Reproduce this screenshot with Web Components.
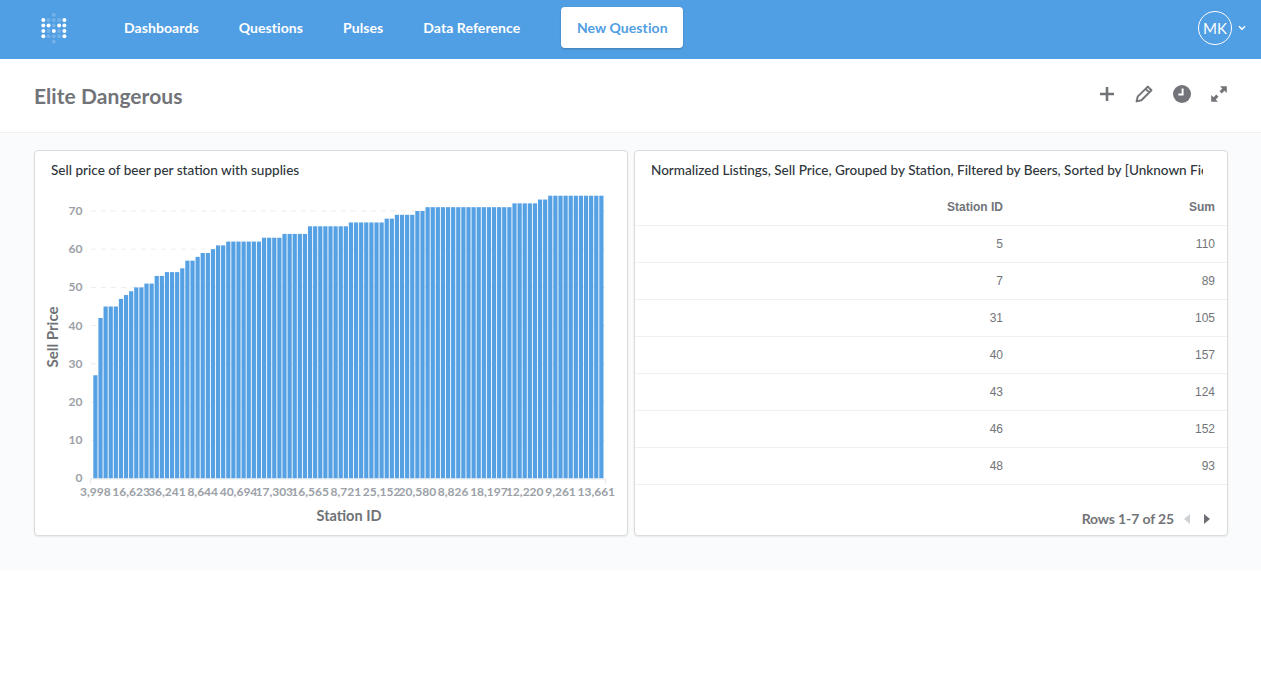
<!DOCTYPE html>
<html>
<head>
<meta charset="utf-8">
<title>Elite Dangerous</title>
<style>
  html, body { margin: 0; padding: 0; background: #fff; font-family: Lato, "Liberation Sans", sans-serif; }
</style>
</head>
<body>
<mb-nav></mb-nav>
<dash-header title="Elite Dangerous"></dash-header>
<dash-grid>
  <dash-card title="Sell price of beer per station with supplies">
    <bar-chart></bar-chart>
  </dash-card>
  <dash-card title="Normalized Listings, Sell Price, Grouped by Station, Filtered by Beers, Sorted by [Unknown Field] descending">
    <data-table></data-table>
  </dash-card>
</dash-grid>

<script>
class MbNav extends HTMLElement {
  constructor() {
    super();
    this.attachShadow({ mode: 'open' });
  }

  connectedCallback() {
    // logo is a 5 x 6 dot matrix, bright dots spell the M
    const bright = new Set(['0,1','0,2','0,3','0,4','4,1','4,2','4,3','4,4','1,2','3,2','2,3']);
    let dots = '';
    for (let c = 0; c < 5; c++) {
      for (let r = 0; r < 6; r++) {
        if ((r === 0 || r === 5) && c !== 2) continue;
        const on = bright.has(`${c},${r}`);
        dots += `<circle cx="${3.3 + c * 5.27}" cy="${2.7 + r * 5.4}" r="2" fill="#fff" fill-opacity="${on ? 1 : 0.2}"/>`;
      }
    }
    this.shadowRoot.innerHTML = `
      <style>
        :host { display: flex; align-items: center; height: 59px; box-sizing: border-box; padding-bottom: 4px; background: #509ee3; color: #fff; font: 700 14px Lato, sans-serif; letter-spacing: .08px; }
        .logo { width: 124px; flex: none; display: flex; padding-left: 40px; box-sizing: border-box; }
        .links { display: flex; align-items: center; gap: 40px; }
        .btn { background: #fff; color: #509ee3; height: 41px; width: 122px; margin-left: 1px; border-radius: 4px; display: flex; align-items: center; justify-content: center; box-shadow: 0 1px 2px rgba(0,0,0,0.2); }
        .user { margin-left: auto; display: flex; align-items: center; padding-right: 15px; }
        .avatar { width: 32px; height: 32px; border: 1px solid #fff; border-radius: 50%; display: flex; align-items: center; justify-content: center; font: 400 15px Lato, sans-serif; }
        .chev { margin-left: 6px; display: block; }
      </style>
      <div class="logo"><svg width="28" height="32" viewBox="0 0 28 32">${dots}</svg></div>
      <div class="links">
        <span>Dashboards</span><span>Questions</span><span>Pulses</span><span>Data Reference</span>
        <span class="btn">New Question</span>
      </div>
      <div class="user">
        <div class="avatar">MK</div>
        <svg class="chev" width="8" height="6" viewBox="0 0 8 6"><path d="M1 1.2 4 4.2 7 1.2" fill="none" stroke="#fff" stroke-width="1.5"/></svg>
      </div>`;
  }
}
customElements.define('mb-nav', MbNav);

class DashHeader extends HTMLElement {
  constructor() {
    super();
    this.attachShadow({ mode: 'open' });
  }

  connectedCallback() {
    this.shadowRoot.innerHTML = `
      <style>
        :host { display: flex; align-items: center; height: 74px; box-sizing: border-box; padding: 0 33px 0 34px; background: #fff; border-bottom: 1px solid #f0f0f0; }
        h1 { margin: 0; font: 700 21px Lato, sans-serif; letter-spacing: .06px; color: #727479; }
        .tools { margin-left: auto; display: flex; align-items: center; gap: 19.5px; position: relative; top: -2px; }
        svg { display: block; }
      </style>
      <h1>${this.getAttribute('title')}</h1>
      <div class="tools">
        <svg width="18" height="18" viewBox="0 0 18 18"><path d="M9 2v14M2 9h14" stroke="#727479" stroke-width="2.6" fill="none"/></svg>
        <svg width="18" height="18" viewBox="0 0 18 18"><path d="M12.8 1.6l3.6 3.6-10 10-4.8 1.2 1.1-4.8zM10.6 3.9l3.5 3.5" fill="none" stroke="#727479" stroke-width="2" stroke-linejoin="round"/></svg>
        <svg width="18" height="18" viewBox="0 0 18 18"><circle cx="9" cy="9" r="9" fill="#727479"/><path d="M9.6 3.6v6H5.4" fill="none" stroke="#fff" stroke-width="2"/></svg>
        <svg width="18" height="18" viewBox="-1 -1 18 18"><path d="M9 .2h6.8V7l-2.3-2.3-2.8 2.8-2.2-2.2 2.8-2.8zM7 15.8H.2V9l2.3 2.3 2.8-2.8 2.2 2.2-2.8 2.8z" fill="#727479"/></svg>
      </div>`;
  }
}
customElements.define('dash-header', DashHeader);

class DashGrid extends HTMLElement {
  constructor() {
    super();
    this.attachShadow({ mode: 'open' });
    this.shadowRoot.innerHTML = `
      <style>
        :host { display: grid; grid-template-columns: 594px 594px; gap: 6px; padding: 17px 33px 35px 34px; background: #f9fbfc; }
      </style>
      <slot></slot>`;
  }
}
customElements.define('dash-grid', DashGrid);

class DashCard extends HTMLElement {
  constructor() {
    super();
    this.attachShadow({ mode: 'open' });
  }

  connectedCallback() {
    this.shadowRoot.innerHTML = `
      <style>
        :host { display: block; height: 386px; box-sizing: border-box; background: #fff; border: 1px solid #dbdbdb; border-radius: 4px; box-shadow: 0 1px 2px rgba(0,0,0,0.08); overflow: hidden; }
        .title { margin: 11px 24px 0 16px; height: 17px; font: 500 13.55px/17px Lato, sans-serif; color: #2e353b; white-space: nowrap; overflow: hidden; }
      </style>
      <div class="title">${this.getAttribute('title')}</div>
      <slot></slot>`;
  }
}
customElements.define('dash-card', DashCard);

class BarChart extends HTMLElement {
  constructor() {
    super();
    this.attachShadow({ mode: 'open' });
  }

  connectedCallback() {
    const runs = [[27,1],[42,1],[45,3],[47,1],[48,1],[49,1],[50,2],[51,2],[53,2],[54,3],[55,1],[57,2],[58,1],[59,2],[60,1],[61,2],[62,7],[63,4],[64,5],[66,8],[67,7],[68,2],[69,4],[70,2],[71,17],[72,5],[73,2],[74,11]];
    const values = runs.flatMap(([v, n]) => Array(n).fill(v));
    const ticks = ['3,998','16,623','36,241','8,644','40,694','17,303','16,565','8,721','25,152','20,580','8,826','18,197','12,220','9,261','13,661'];
    // svg origin is the card's inner box: page x - 35, page y - 179
    const ox = 35, oy = 179;
    const base = 478.4 - oy, unit = 3.82, pitch = 5.111, barW = 4.2, x0 = 93.3 - ox;
    let grid = '', bars = '', labels = '';
    for (let v = 0; v <= 70; v += 10) {
      const y = base - v * unit;
      if (v > 0) grid += `<line x1="${91 - ox}" x2="${605 - ox}" y1="${y}" y2="${y}" stroke="#ececec" stroke-dasharray="5 5"/>`;
      labels += `<text class="tick" x="${82.5 - ox}" y="${y + 4}" text-anchor="end">${v}</text>`;
    }
    values.forEach((v, i) => {
      const h = v * unit;
      bars += `<rect x="${x0 + i * pitch}" y="${base - h}" width="${barW}" height="${h}" fill="#509ee3" fill-opacity="0.97"/>`;
    });
    ticks.forEach((t, i) => {
      labels += `<text class="tick" x="${x0 + barW / 2 + i * 7 * pitch}" y="${495.5 - oy}" text-anchor="middle">${t}</text>`;
    });
    this.shadowRoot.innerHTML = `
      <style>
        :host { display: block; }
        svg { display: block; }
        .tick { font: 700 12px Lato, sans-serif; fill: #9ba1a7; }
        .axis { font: 700 14.5px Lato, sans-serif; fill: #6f7276; }
      </style>
      <svg width="592" height="356" viewBox="0 0 592 356">
        ${grid}${bars}
        <path d="M${90.7 - ox} ${base + 5}V${base + .5}H${605.3 - ox}V${base + 5}" fill="none" stroke="#dfe3e8"/>
        ${labels}
        <text class="axis" x="${349 - ox}" y="${521 - oy}" text-anchor="middle">Station ID</text>
        <text class="axis" style="font-size:15px" transform="translate(${58 - ox} ${337 - oy}) rotate(-90)" text-anchor="middle">Sell Price</text>
      </svg>`;
  }
}
customElements.define('bar-chart', BarChart);

class DataTable extends HTMLElement {
  constructor() {
    super();
    this.attachShadow({ mode: 'open' });
  }

  connectedCallback() {
    const rows = [[5,110],[7,89],[31,105],[40,157],[43,124],[46,152],[48,93]];
    this.shadowRoot.innerHTML = `
      <style>
        :host { display: block; padding-top: 9px; font: 400 12px "Liberation Sans", Arial, sans-serif; color: #727479; }
        .row { display: grid; grid-template-columns: 380px 212px; height: 37px; align-items: center; box-sizing: border-box; border-bottom: 1px solid #f0f0f0; text-align: right; }
        .row span { padding-right: 12px; }
        .head { height: 38px; font-weight: 700; }
        .foot { display: flex; align-items: center; justify-content: flex-end; height: 35px; margin-top: 16px; padding-right: 17px; font: 700 14px Lato, sans-serif; letter-spacing: -.14px; }
        .foot svg { display: block; margin-left: 10px; }
        .foot svg.next { margin-left: 14px; }
      </style>
      <div class="row head"><span>Station ID</span><span>Sum</span></div>
      ${rows.map(([id, sum]) => `<div class="row"><span>${id}</span><span>${sum}</span></div>`).join('')}
      <div class="foot">
        <span>Rows 1-7 of 25</span>
        <svg width="6" height="10" viewBox="0 0 6 10"><path d="M6 0v10L0 5z" fill="#cfd2d5"/></svg>
        <svg class="next" width="6" height="10" viewBox="0 0 6 10"><path d="M0 0v10l6-5z" fill="#6b6e73"/></svg>
      </div>`;
  }
}
customElements.define('data-table', DataTable);
</script>
</body>
</html>
